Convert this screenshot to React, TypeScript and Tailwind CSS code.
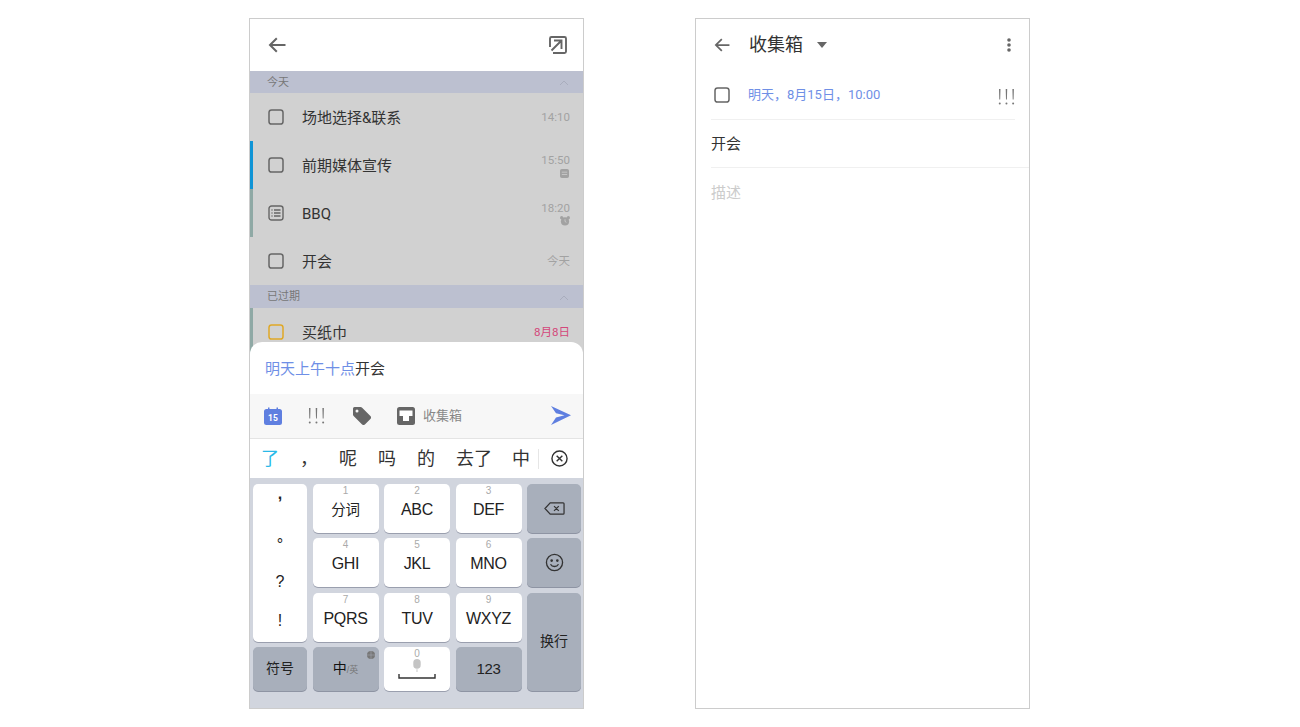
const font = { sans: "font-['Roboto','Noto_Sans_CJK_SC',sans-serif]" };

function BackArrow({ className }: { className?: string }) {
  return (
    <svg viewBox="0 0 18 16" className={className} fill="none" stroke="#666" strokeWidth="2">
      <path d="M17.500 8H2M8.800 1.200 2 8l6.800 6.800" />
    </svg>
  );
}

function Checkbox({ color = "#666" }: { color?: string }) {
  return (
    <svg viewBox="0 0 16 16" className="h-4 w-4 shrink-0" fill="none" stroke={color} strokeWidth="1.500">
      <rect x="1" y="1" width="14" height="14" rx="2.600" />
    </svg>
  );
}

function ChevronUp() {
  return (
    <svg viewBox="0 0 10 6" className="h-[6px] w-[10px]" fill="none" stroke="#a9adbd" strokeWidth="1">
      <path d="M1 5 5 1l4 4" />
    </svg>
  );
}

function Bangs({ className }: { className?: string }) {
  return (
    <svg viewBox="0 0 17 16" className={className} fill="#777">
      <path d="M1 0h1.500l-.3 10.500h-.9zM7.700 0h1.500l-.3 10.500H8zM14.400 0h1.500l-.3 10.500h-.9z" />
      <circle cx="1.750" cy="14.600" r="1" />
      <circle cx="8.450" cy="14.600" r="1" />
      <circle cx="15.150" cy="14.600" r="1" />
    </svg>
  );
}

function SectionHeader({ title, className }: { title: string; className: string }) {
  return (
    <div className={`flex items-center justify-between bg-[#bcc0d0] pl-[17px] pr-[14px] pt-[2px] text-[11px] text-[#777] ${className}`}>
      <span>{title}</span>
      <ChevronUp />
    </div>
  );
}

type RowProps = {
  title: string;
  time: string;
  bar?: string;
  icon?: React.ReactNode;
  sub?: React.ReactNode;
  timeClass?: string;
};

function TaskRow({ title, time, bar = "border-transparent", icon, sub, timeClass = "text-[#a2a2a2]" }: RowProps) {
  return (
    <div className={`flex h-12 shrink-0 items-center border-l-[3px] pl-[15px] pr-[13px] ${bar}`}>
      {icon ?? <Checkbox />}
      <span className="ml-[18px] mt-[2px] flex-1 text-[15px] text-[#333]">{title}</span>
      <div className={`flex flex-col items-end text-[11.500px] leading-[14px] ${timeClass}`}>
        <span>{time}</span>
        {sub}
      </div>
    </div>
  );
}

function Key({ num, label, labelClass = "text-[16px]" }: { num?: string; label: string; labelClass?: string }) {
  return (
    <div className="relative flex flex-col items-center rounded-[5px] bg-white shadow-[0_1px_0_#9a9fae]">
      <span className="mt-[1px] text-[10px] leading-[11px] text-[#aaa]">{num}</span>
      <span className={`mt-[2px] leading-[24px] tracking-[-0.3px] text-[#222] ${labelClass}`}>{label}</span>
    </div>
  );
}

function GrayKey({ children, className = "" }: { children: React.ReactNode; className?: string }) {
  return (
    <div className={`flex items-center justify-center rounded-[5px] bg-[#a8afbb] text-[14px] text-[#222] shadow-[0_1px_0_#8e94a3] ${className}`}>
      {children}
    </div>
  );
}

function Keyboard() {
  return (
    <div className="flex-1 bg-[#d1d5de] pl-[3px] pt-[6px] font-['Liberation_Sans','Noto_Sans_CJK_SC',sans-serif]">
      <div className="grid grid-cols-[54px_66px_66px_66px_54px] grid-rows-[49px_49px_49px_44px] gap-x-[5.500px] gap-y-[5.250px]">
        <div className="row-span-3 flex flex-col items-center rounded-[5px] bg-white text-[16px] text-[#222] shadow-[0_1px_0_#9a9fae]">
          <span className="flex h-[39px] items-center pb-[20px] font-bold">,</span>
          <span className="flex h-[39px] items-center pt-[5px]">°</span>
          <span className="flex h-[39px] items-center">?</span>
          <span className="flex h-[39px] items-center">!</span>
        </div>
        <Key num="1" label="分词" labelClass="text-[14.500px]" />
        <Key num="2" label="ABC" />
        <Key num="3" label="DEF" />
        <GrayKey>
          <svg viewBox="0 0 22 15" className="h-[15px] w-[21px]" fill="none" stroke="#333" strokeWidth="1.300">
            <path d="M6.500 1.500H20a1 1 0 0 1 1 1v10a1 1 0 0 1-1 1H6.500L1 7.500zM10.500 5l5 5M15.500 5l-5 5" />
          </svg>
        </GrayKey>
        <Key num="4" label="GHI" />
        <Key num="5" label="JKL" />
        <Key num="6" label="MNO" />
        <GrayKey>
          <svg viewBox="0 0 20 20" className="h-[19px] w-[19px]" fill="none" stroke="#333" strokeWidth="1.400">
            <circle cx="10" cy="10" r="8.500" />
            <circle cx="7" cy="8" r=".7" fill="#333" />
            <circle cx="13" cy="8" r=".7" fill="#333" />
            <path d="M5.800 11.800c1.800 3.200 6.600 3.200 8.400 0" />
          </svg>
        </GrayKey>
        <Key num="7" label="PQRS" />
        <Key num="8" label="TUV" />
        <Key num="9" label="WXYZ" />
        <GrayKey className="row-span-2">换行</GrayKey>
        <GrayKey>符号</GrayKey>
        <GrayKey className="relative">
          <span className="text-[14px] text-[#111]">中</span>
          <span className="mt-[3px] text-[9px] text-[#777]">/英</span>
          <svg viewBox="0 0 10 10" className="absolute right-[4px] top-[4px] h-2 w-2" fill="#777">
            <circle cx="5" cy="5" r="5" />
            <path d="M0 5h10M5 0v10" stroke="#a8afbb" strokeWidth=".6" />
          </svg>
        </GrayKey>
        <div className="flex flex-col items-center rounded-[5px] bg-white shadow-[0_1px_0_#9a9fae]">
          <span className="mt-[1px] text-[10px] leading-[11px] text-[#aaa]">0</span>
          <svg viewBox="0 0 10 14" className="h-[13px] w-[10px]" fill="#c4c4c4">
            <rect x="1" y="0" width="8" height="10.500" rx="4" />
            <path d="M4.500 11h1v3h-1z" />
          </svg>
          <svg viewBox="0 0 38 5" className="mt-[2px] h-[5px] w-[38px]" fill="none" stroke="#333" strokeWidth="1.400">
            <path d="M1 0v4h36V0" />
          </svg>
        </div>
        <GrayKey className="tracking-[-0.3px] text-[15px]">123</GrayKey>
      </div>
    </div>
  );
}

function ListScreen() {
  return (
    <div className="flex h-[691px] w-[335px] flex-col overflow-hidden border border-[#ccc] bg-[#d1d1d1]">
      <header className="flex h-[52px] shrink-0 items-center justify-between bg-white pl-[18px] pr-4">
        <BackArrow className="h-4 w-[18px]" />
        <svg viewBox="0 0 18 18" className="h-[18px] w-[18px]" fill="none" stroke="#666" strokeWidth="1.900">
          <path d="M1 11V2.500A1.500 1.500 0 0 1 2.500 1h13A1.500 1.500 0 0 1 17 2.500v13a1.500 1.500 0 0 1-1.500 1.500H4M2.500 14.500l10-10M5 4.500h7.500V13" />
        </svg>
      </header>
      <div className="min-h-0 flex-1 overflow-hidden">
        <SectionHeader title="今天" className="h-[22px]" />
        <TaskRow title="场地选择&联系" time="14:10" />
        <TaskRow
          title="前期媒体宣传"
          time="15:50"
          bar="border-[#0f94d6]"
          sub={
            <svg viewBox="0 0 10 10" className="mr-[1px] mt-[2px] h-[9px] w-[9px]" fill="#a2a2a2">
              <path d="M2 0h6a2 2 0 0 1 2 2v6a2 2 0 0 1-2 2H2a2 2 0 0 1-2-2V2a2 2 0 0 1 2-2zm0 3v1h6V3zm0 2.500v1h6v-1z" fillRule="evenodd" />
            </svg>
          }
        />
        <TaskRow
          title="BBQ"
          time="18:20"
          bar="border-[#8fa9a5]"
          icon={
            <svg viewBox="0 0 16 16" className="h-4 w-4 shrink-0" fill="none" stroke="#666" strokeWidth="1.400">
              <rect x="1" y="1" width="14" height="14" rx="2.600" />
              <path d="M3.500 5h1M6 5h6.500M3.500 8h1M6 8h6.500M3.500 11h1M6 11h6.500" />
            </svg>
          }
          sub={
            <svg viewBox="0 0 11 11" className="mt-[1px] h-[10px] w-[10px]" fill="#a2a2a2">
              <circle cx="5.500" cy="6" r="4.500" />
              <circle cx="1.800" cy="1.800" r="1.800" />
              <circle cx="9.200" cy="1.800" r="1.800" />
              <path d="M5.500 3.500V6l1.500 1" fill="none" stroke="#d1d1d1" strokeWidth=".8" />
            </svg>
          }
        />
        <TaskRow title="开会" time="今天" />
        <SectionHeader title="已过期" className="h-[23px]" />
        <TaskRow title="买纸巾" time="8月8日" bar="border-[#8fa9a5]" icon={<Checkbox color="#dfa827" />} timeClass="text-[#d4477a]" />
      </div>
      <div className="relative -mt-3 shrink-0 overflow-hidden rounded-t-xl bg-white">
        <div className="flex h-[52px] items-center pl-[15px] pt-[2px] text-[15px] text-[#333]">
          <span className="text-[#6f8fe6]">明天上午十点</span>
          <span>开会</span>
        </div>
        <div className="flex h-[45px] items-center border-b border-[#e4e4e4] bg-[#f7f7f7] pl-[14px] pr-3">
          <svg viewBox="0 0 18 18" className="h-[18px] w-[18px]">
            <path d="M2.500 2H4V.5h1.500V2h7V.5H14V2h1.500A2.500 2.500 0 0 1 18 4.500v11a2.500 2.500 0 0 1-2.500 2.500h-13A2.500 2.500 0 0 1 0 15.500v-11A2.500 2.500 0 0 1 2.500 2z" fill="#5f7fe0" />
            <text x="9" y="14" textAnchor="middle" fontSize="8.500" fontWeight="700" fill="#fff" fontFamily="Roboto">15</text>
          </svg>
          <Bangs className="ml-[26px] h-4 w-[17px]" />
          <svg viewBox="0 0 18 18" className="ml-[28px] h-[18px] w-[18px]" fill="#666">
            <path d="M1.500 0h6a2 2 0 0 1 1.400.6l8.500 8.500a2 2 0 0 1 0 2.800l-5.500 5.500a2 2 0 0 1-2.800 0L.6 8.900A2 2 0 0 1 0 7.500v-6A1.500 1.500 0 0 1 1.500 0zM4 2.500a1.500 1.500 0 1 0 0 3 1.500 1.500 0 0 0 0-3z" fillRule="evenodd" />
          </svg>
          <svg viewBox="0 0 18 18" className="ml-[26px] h-[18px] w-[18px]">
            <rect width="18" height="18" rx="2.500" fill="#666" />
            <path d="M2.500 3.500h13V9h-3.500v5H6V9H2.500z" fill="#fff" />
          </svg>
          <span className="ml-2 flex-1 text-[13px] text-[#888]">收集箱</span>
          <svg viewBox="0 0 20 20" preserveAspectRatio="none" className="-mt-[2px] h-[19px] w-5" fill="#5f7fe0">
            <path d="M0 0 20 9.800 0 20l5-8 8.500-2.200L5 7.600z" />
          </svg>
        </div>
        <div className="flex h-[39px] items-center gap-[21px] pl-[11px] text-[18px] text-[#333]">
          <span className="text-[#29b9e8]">了</span>
          <span>，</span>
          <span>呢</span>
          <span>吗</span>
          <span>的</span>
          <span>去了</span>
          <span className="-ml-[1px]">中</span>
          <div className="-ml-[13px] flex items-center">
            <div className="h-[20px] w-px bg-[#e6e6e6]" />
            <svg viewBox="0 0 18 18" className="ml-3 h-[17px] w-[17px]" fill="none" stroke="#333" strokeWidth="1.500">
              <circle cx="9" cy="9" r="8" />
              <path d="m6 6 6 6M12 6l-6 6" />
            </svg>
          </div>
        </div>
      </div>
      <div className="flex h-[230px] shrink-0 flex-col">
        <Keyboard />
      </div>
    </div>
  );
}

function DetailScreen() {
  return (
    <div className="flex h-[691px] w-[335px] flex-col border border-[#ccc] bg-white">
      <header className="flex h-[53px] shrink-0 items-center pb-[1px] pl-[18px] pr-[18px]">
        <BackArrow className="h-[14px] w-4" />
        <span className="ml-[19px] text-lg text-[#333]">收集箱</span>
        <svg viewBox="0 0 10 6" className="ml-[14px] h-[6px] w-[10px]" fill="#666">
          <path d="M0 0h10L5 6z" />
        </svg>
        <svg viewBox="0 0 4 14" className="ml-auto h-[14px] w-1" fill="#666">
          <circle cx="2" cy="2" r="1.800" />
          <circle cx="2" cy="7" r="1.800" />
          <circle cx="2" cy="12" r="1.800" />
        </svg>
      </header>
      <div className="ml-[15px] mr-[14px] flex h-12 items-center border-b border-[#f0f0f0] pb-[1px]">
        <div className="ml-[3px]">
          <Checkbox />
        </div>
        <span className="ml-[18px] flex-1 text-[13px] text-[#6f8fe6]">明天，8月15日，10:00</span>
        <Bangs className="mt-[3px] h-4 w-[17px]" />
      </div>
      <div className="ml-[15px] flex h-12 items-center border-b border-[#f0f0f0] pt-[2px] text-[15px] text-[#333]">开会</div>
      <div className="ml-[15px] flex h-[50px] items-center pt-[1px] text-[15px] text-[#ccc]">描述</div>
    </div>
  );
}

export default function App() {
  return (
    <div className={`flex h-[727px] w-[1300px] gap-[111px] bg-white pl-[249px] pt-[18px] ${font.sans}`}>
      <ListScreen />
      <DetailScreen />
    </div>
  );
}
